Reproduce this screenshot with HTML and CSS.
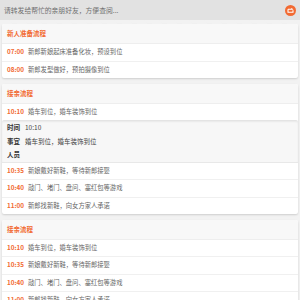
FILE: index.html
```html
<!DOCTYPE html>
<html lang="zh">
<head>
  <meta charset="UTF-8">
  <meta name="viewport" content="width=device-width, initial-scale=1.0">
  <title>婚礼流程</title>
  <link rel="stylesheet" href="styles.css">
</head>
<body>
  <div class="topbar">
    <span class="tip">请转发给帮忙的亲朋好友，方便查阅...</span>
    <svg class="share" width="11" height="11" viewBox="0 0 11 11">
      <circle cx="5.5" cy="5.5" r="5.5" fill="#f26a32"/>
      <path d="M3 4.2h4.2l-0.8-0.9M3 4.2v3h5v-2" fill="none" stroke="#fff" stroke-width="1.1"/>
    </svg>
  </div>

  <div class="list">
    <div class="card">
      <div class="card-head">新人准备流程</div>
      <div class="row"><span class="time">07:00</span>新郎新娘起床准备化妆，预设到位</div>
      <div class="row"><span class="time">08:00</span>新郎发型做好，预拍摄像到位</div>
    </div>

    <div class="card">
      <div class="card-head">接亲流程</div>
      <div class="row open"><span class="time">10:10</span>婚车到位，婚车装饰到位</div>
      <div class="detail">
        <div class="detail-line"><b>时间</b>10:10</div>
        <div class="detail-line"><b>事宜</b>婚车到位，婚车装饰到位</div>
        <div class="detail-line"><b>人员</b></div>
      </div>
      <div class="row"><span class="time">10:35</span>新娘戴好新鞋，等待新郎接娶</div>
      <div class="row"><span class="time">10:40</span>敲门、堵门、盘问、塞红包等游戏</div>
      <div class="row"><span class="time">11:00</span>新郎找新鞋，向女方家人承诺</div>
    </div>

    <div class="card">
      <div class="card-head">接亲流程</div>
      <div class="row"><span class="time">10:10</span>婚车到位，婚车装饰到位</div>
      <div class="row"><span class="time">10:35</span>新娘戴好新鞋，等待新郎接娶</div>
      <div class="row"><span class="time">10:40</span>敲门、堵门、盘问、塞红包等游戏</div>
      <div class="row"><span class="time">11:00</span>新郎找新鞋，向女方家人承诺</div>
    </div>
  </div>
</body>
</html>
```

FILE: styles.css
```css
body {
  font-family: "Noto Sans CJK SC", "Noto Sans", sans-serif;
  margin: 0;
  background: #f2f2f2;
  color: #555;
  overflow: hidden;
}
.topbar {
  position: relative;
  height: 20px;
  background: #e2e2e2;
  display: flex;
  align-items: center;
  justify-content: space-between;
  padding: 0 4px;
}
/* 波浪形底边 */
.topbar::after {
  content: "";
  position: absolute;
  left: 0;
  right: 0;
  bottom: -4px;
  height: 5px;
  background: radial-gradient(circle at 7px 6px, #f2f2f2 5px, transparent 5.5px) repeat-x;
  background-size: 15px 5px;
}
.tip {
  font-size: 6.8px;
  color: #707070;
}
.share {
  display: block;
}
.list {
  display: flex;
  flex-direction: column;
  gap: 5.5px;
  padding: 4px 2px 0;
}
.card {
  background: #fff;
  border-radius: 2px;
  box-shadow: 0 1px 2px rgba(0, 0, 0, 0.15);
  overflow: hidden;
}
.card-head {
  height: 19px;
  line-height: 19px;
  padding-left: 5px;
  background: #f8f8f8;
  color: #f26a32;
  font-size: 6.5px;
  font-weight: bold;
  border-bottom: 1px solid #eee;
}
.row {
  height: 16.5px;
  line-height: 16.5px;
  padding-left: 5px;
  font-size: 6.3px;
  color: #666;
  border-bottom: 1px solid #f0f0f0;
  white-space: nowrap;
}
.row:last-child,
.row.open {
  border-bottom: none;
}
.time {
  display: inline-block;
  width: 21px;
  color: #f26a32;
  font-size: 6.3px;
  font-weight: bold;
}
.detail {
  background: #f7f7f7;
  border-top: 1px solid #e4e4e4;
  border-bottom: 1px solid #e8e8e8;
  border-radius: 2px 2px 0 0;
  box-shadow: inset 0 1px 2px rgba(0, 0, 0, 0.06);
  padding-left: 5px;
}
.detail-line {
  height: 13.5px;
  line-height: 13.5px;
  font-size: 6.5px;
  color: #444;
}
.detail-line b {
  display: inline-block;
  width: 18px;
  color: #333;
}
```
